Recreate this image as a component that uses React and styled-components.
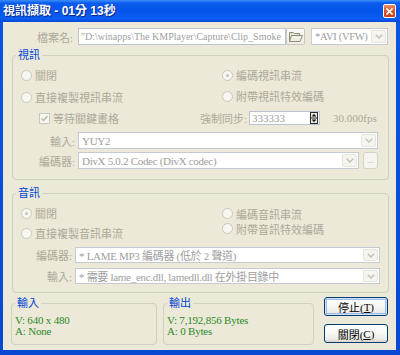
import React from 'react';
import styled, { createGlobalStyle, css } from 'styled-components';

const UI = `"Liberation Serif", "Noto Sans CJK TC", serif`;
const GREY = '#ACA899';

const Global = createGlobalStyle`
  html, body { margin: 0; padding: 0; background: #ffffff; }
  body { font-family: ${UI}; font-size: 11px; }
  * { box-sizing: border-box; }
`;

const Window = styled.div`
  width: 400px;
  height: 355px;
  display: flex;
  flex-direction: column;
  overflow: hidden;
  background: linear-gradient(180deg, #0A55E2 0%, #0848D2 100%);
`;

const TitleBar = styled.div`
  flex: none;
  height: 22px;
  display: flex;
  align-items: center;
  justify-content: space-between;
  padding: 0 4px 0 3px;
  background: linear-gradient(180deg, #3D8EF7 0%, #0A5CF0 14%, #0554E8 50%, #0A5EF2 86%, #0848D6 100%);
`;

const Title = styled.span`
  color: #ffffff;
  font: bold 12px "Liberation Sans", "Noto Sans CJK TC", sans-serif;
  line-height: 14px;
  text-shadow: 1px 1px 0 #0A2A8A;
  white-space: nowrap;
`;

const CloseBtn = styled.span`
  width: 13px;
  height: 14px;
  display: flex;
  align-items: center;
  justify-content: center;
  border: 1px solid #ffffff;
  border-radius: 2px;
  background: linear-gradient(180deg, #E98A6A 0%, #DA5B33 45%, #C9401A 100%);
`;

const Client = styled.div`
  flex: none;
  height: 328px;
  margin: 0 4px 0 3px;
  background: #ECE9D8;
  padding-top: 6px;
  display: flex;
  flex-direction: column;
  color: ${GREY};
`;

const Row = styled.div`
  display: flex;
  align-items: center;
  flex: none;
  height: ${p => p.$h}px;
  margin-top: ${p => p.$mt || 0}px;
`;

const FieldLabel = styled.span`
  width: ${p => p.$w}px;
  margin-right: ${p => p.$mr || 3}px;
  text-align: right;
  color: ${GREY};
  font-size: 11px;
  white-space: nowrap;
  flex: none;
`;

const TextBox = styled.div`
  width: ${p => p.$w}px;
  height: ${p => p.$h ? `${p.$h}px` : '100%'};
  border: 1px solid #B9C4D0;
  background: #ffffff;
  color: #9E9E9E;
  padding: 0 1px 0 2px;
  display: flex;
  align-items: center;
  justify-content: space-between;
  overflow: hidden;
  white-space: nowrap;
  font-size: ${p => p.$fs || 11}px;
  flex: none;
`;

const BrowseBtn = styled.span`
  width: 19px;
  height: 17px;
  flex: none;
  display: flex;
  align-items: center;
  justify-content: center;
  border: 1px solid #C9C7BA;
  border-radius: 2px;
  background: linear-gradient(180deg, #FBFBF8 0%, #EEEDE6 100%);
`;

const Combo = styled.div`
  width: ${p => p.$w}px;
  margin-left: ${p => p.$ml || 0}px;
  height: 100%;
  border: 1px solid #C4CBD3;
  background: #ffffff;
  color: #9E9E9E;
  padding: 1px 1px 1px 3px;
  display: flex;
  align-items: center;
  justify-content: space-between;
  white-space: nowrap;
  overflow: hidden;
  font-size: ${p => p.$fs || 11}px;
  flex: none;
`;

const ComboText = styled.span`
  overflow: hidden;
  flex: 1;
  letter-spacing: -0.3px;
`;

const ComboArrow = styled.span`
  width: 15px;
  height: 100%;
  flex: none;
  display: flex;
  align-items: center;
  justify-content: center;
  background: #F5F4EF;
  border: 1px solid #E6E4DC;
  border-radius: 2px;
`;

const EllipsisBtn = styled.span`
  width: 15px;
  height: 17px;
  margin-left: 4px;
  flex: none;
  display: flex;
  align-items: flex-end;
  justify-content: center;
  padding-bottom: 3px;
  border: 1px solid #D5D3C8;
  border-radius: 3px;
  background: #F5F4EF;
  color: #B5B2A4;
  font-size: 9px;
  line-height: 9px;
`;

const Group = styled.div`
  position: relative;
  flex: none;
  margin: ${p => p.$mt}px 7px 0 9px;
  border: 1px solid #D0D0BF;
  border-radius: 4px;
  padding: ${p => p.$pt}px 0 ${p => p.$pb}px 0;
`;

const GroupTitle = styled.span`
  position: absolute;
  top: -7px;
  left: 3px;
  padding: 0 2px;
  background: #ECE9D8;
  color: #0046D5;
  font-size: 11px;
  line-height: 13px;
`;

const RadioGrid = styled.div`
  display: grid;
  grid-template-columns: 201px 1fr;
  padding-left: 8px;
`;

const RadioCol = styled.div`
  display: flex;
  flex-direction: column;
  padding-top: ${p => p.$offset || 0}px;
`;

const RadioItem = styled.div`
  display: flex;
  align-items: center;
  gap: 3px;
  height: ${p => p.$h}px;
  color: ${GREY};
  font-size: 11px;
  white-space: nowrap;
`;

const RadioCircle = styled.span`
  position: relative;
  width: 11px;
  height: 11px;
  flex: none;
  border-radius: 50%;
  border: 1px solid #CAC8BB;
  background: #F7F6F2;
  ${p => p.$on && css`
    &::after {
      content: '';
      position: absolute;
      left: 3px;
      top: 3px;
      width: 3px;
      height: 3px;
      border-radius: 50%;
      background: #C6C3B4;
    }
  `}
`;

const CheckWrap = styled.div`
  width: 187px;
  padding-left: 26px;
  display: flex;
  align-items: center;
  gap: 3px;
  flex: none;
  white-space: nowrap;
`;

const CheckBoxBox = styled.span`
  width: 11px;
  height: 11px;
  flex: none;
  border: 1px solid #CAC8BB;
  background: #F7F6F2;
  display: flex;
  align-items: center;
  justify-content: center;
`;

const Plain = styled.span`
  color: ${GREY};
  font-size: 11px;
  white-space: nowrap;
  margin-left: ${p => p.$ml || 0}px;
  margin-right: ${p => p.$mr || 0}px;
`;

const BottomRow = styled.div`
  display: flex;
  flex: none;
  margin: 4px 0 0 8px;
  height: 48px;
`;

const InfoGroup = styled.div`
  position: relative;
  width: ${p => p.$w}px;
  height: 42px;
  margin-top: 6px;
  margin-right: ${p => p.$mr}px;
  border: 1px solid #D0D0BF;
  border-radius: 4px;
  padding: 11px 0 0 3px;
  flex: none;
`;

const InfoLine = styled.div`
  color: #2A8A2A;
  font-size: 11px;
  line-height: 11px;
  white-space: nowrap;
  letter-spacing: -0.2px;
`;

const ButtonCol = styled.div`
  display: flex;
  flex-direction: column;
  gap: 8px;
`;

const XPButton = styled.div`
  width: 64px;
  height: 19px;
  display: flex;
  align-items: center;
  justify-content: center;
  border: 1px solid #003C74;
  border-radius: 3px;
  background: linear-gradient(180deg, #FFFFFF 0%, #F8F8F5 45%, #EEEDE7 80%, #D9D4C9 100%);
  color: #000000;
  font-size: 11px;
  ${p => p.$default && css`
    box-shadow: inset 0 0 0 1px #CFE3FD, inset 0 0 0 2px #9DBCEB;
  `}
`;

const Chevron = () => (
  <svg width="8" height="5" viewBox="0 0 8 5">
    <path d="M0.8 0.8 L4 4 L7.2 0.8" fill="none" stroke="#C4C2B6" strokeWidth="1.5" />
  </svg>
);

const Radio = ({ on, h, children }) => (
  <RadioItem $h={h}>
    <RadioCircle $on={on} />
    {children}
  </RadioItem>
);

const ComboBox = ({ w, ml, fs, children }) => (
  <Combo $w={w} $ml={ml} $fs={fs}>
    <ComboText>{children}</ComboText>
    <ComboArrow><Chevron /></ComboArrow>
  </Combo>
);

export default function App() {
  return (
    <>
      <Global />
      <Window>
        <TitleBar>
          <Title>視訊擷取 - 01分 13秒</Title>
          <CloseBtn>
            <svg width="7" height="7" viewBox="0 0 7 7">
              <path d="M1 1 L6 6 M6 1 L1 6" stroke="#ffffff" strokeWidth="1.6" strokeLinecap="square" />
            </svg>
          </CloseBtn>
        </TitleBar>
        <Client>
          <Row $h={17}>
            <FieldLabel $w={70} $mr={5}>檔案名:</FieldLabel>
            <TextBox $w={208} $fs={10}>{'"D:\\winapps\\The KMPlayer\\Capture\\Clip_Smoke'}</TextBox>
            <BrowseBtn>
              <svg width="14" height="11" viewBox="0 0 14 11">
                <path d="M0.5 1.5 H4.5 L5.5 2.5 H10.5 V10.5 H0.5 Z" fill="#E4E2D2" stroke="#8E8C78" />
                <path d="M2.5 4.5 H13.5 L11 10.5 H0.5 Z" fill="#F2F0E2" stroke="#8E8C78" />
              </svg>
            </BrowseBtn>
            <ComboBox w={77} ml={6} fs={10.5}>*AVI (VFW)</ComboBox>
          </Row>

          <Group $mt={10} $pt={8} $pb={10}>
            <GroupTitle>視訊</GroupTitle>
            <RadioGrid>
              <RadioCol>
                <Radio h={22}>關閉</Radio>
                <Radio h={22}>直接複製視訊串流</Radio>
              </RadioCol>
              <RadioCol>
                <Radio h={22} on>編碼視訊串流</Radio>
                <Radio h={20}>附帶視訊特效編碼</Radio>
              </RadioCol>
            </RadioGrid>
            <Row $h={20}>
              <CheckWrap>
                <CheckBoxBox>
                  <svg width="7" height="7" viewBox="0 0 7 7">
                    <path d="M0.5 3.5 L2.5 5.5 L6.5 1" fill="none" stroke="#B9B6A6" strokeWidth="1.4" />
                  </svg>
                </CheckBoxBox>
                <Plain>等待關鍵畫格</Plain>
              </CheckWrap>
              <Plain $mr={2}>強制同步:</Plain>
              <TextBox $w={71} $h={14}>
                <span>333333</span>
                <svg width="8" height="12" viewBox="0 0 8 12">
                  <rect x="0.5" y="0.5" width="7" height="11" fill="#E9E8E2" stroke="#2A2A2A" />
                  <path d="M0.5 6 H7.5" stroke="#2A2A2A" />
                  <path d="M4 1.8 L6.3 4.6 H1.7 Z" fill="#111" />
                  <path d="M4 10.2 L6.3 7.4 H1.7 Z" fill="#111" />
                </svg>
              </TextBox>
              <Plain $ml={13}>30.000fps</Plain>
            </Row>
            <Row $h={17} $mt={4}>
              <FieldLabel $w={62}>輸入:</FieldLabel>
              <ComboBox w={300}>YUY2</ComboBox>
            </Row>
            <Row $h={17} $mt={3}>
              <FieldLabel $w={62}>編碼器:</FieldLabel>
              <ComboBox w={281}>DivX 5.0.2 Codec (DivX codec)</ComboBox>
              <EllipsisBtn>...</EllipsisBtn>
            </Row>
          </Group>

          <Group $mt={13} $pt={9} $pb={8}>
            <GroupTitle>音訊</GroupTitle>
            <RadioGrid>
              <RadioCol>
                <Radio h={20} on>關閉</Radio>
                <Radio h={20}>直接複製音訊串流</Radio>
              </RadioCol>
              <RadioCol $offset={3}>
                <Radio h={15}>編碼音訊串流</Radio>
                <Radio h={15}>附帶音訊特效編碼</Radio>
              </RadioCol>
            </RadioGrid>
            <Row $h={16} $mt={4}>
              <FieldLabel $w={59}>編碼器:</FieldLabel>
              <ComboBox w={305}>* LAME MP3 編碼器 (低於 2 聲道)</ComboBox>
            </Row>
            <Row $h={16} $mt={5}>
              <FieldLabel $w={59}>輸入:</FieldLabel>
              <ComboBox w={305}>* 需要 lame_enc.dll, lamedll.dll 在外掛目錄中</ComboBox>
            </Row>
          </Group>

          <BottomRow>
            <InfoGroup $w={146} $mr={6}>
              <GroupTitle>輸入</GroupTitle>
              <InfoLine>V: 640 x 480</InfoLine>
              <InfoLine>A: None</InfoLine>
            </InfoGroup>
            <InfoGroup $w={151} $mr={10}>
              <GroupTitle>輸出</GroupTitle>
              <InfoLine>V: 7,192,856 Bytes</InfoLine>
              <InfoLine>A: 0 Bytes</InfoLine>
            </InfoGroup>
            <ButtonCol>
              <XPButton $default>停止(<u>T</u>)</XPButton>
              <XPButton>關閉(<u>C</u>)</XPButton>
            </ButtonCol>
          </BottomRow>
        </Client>
      </Window>
    </>
  );
}
